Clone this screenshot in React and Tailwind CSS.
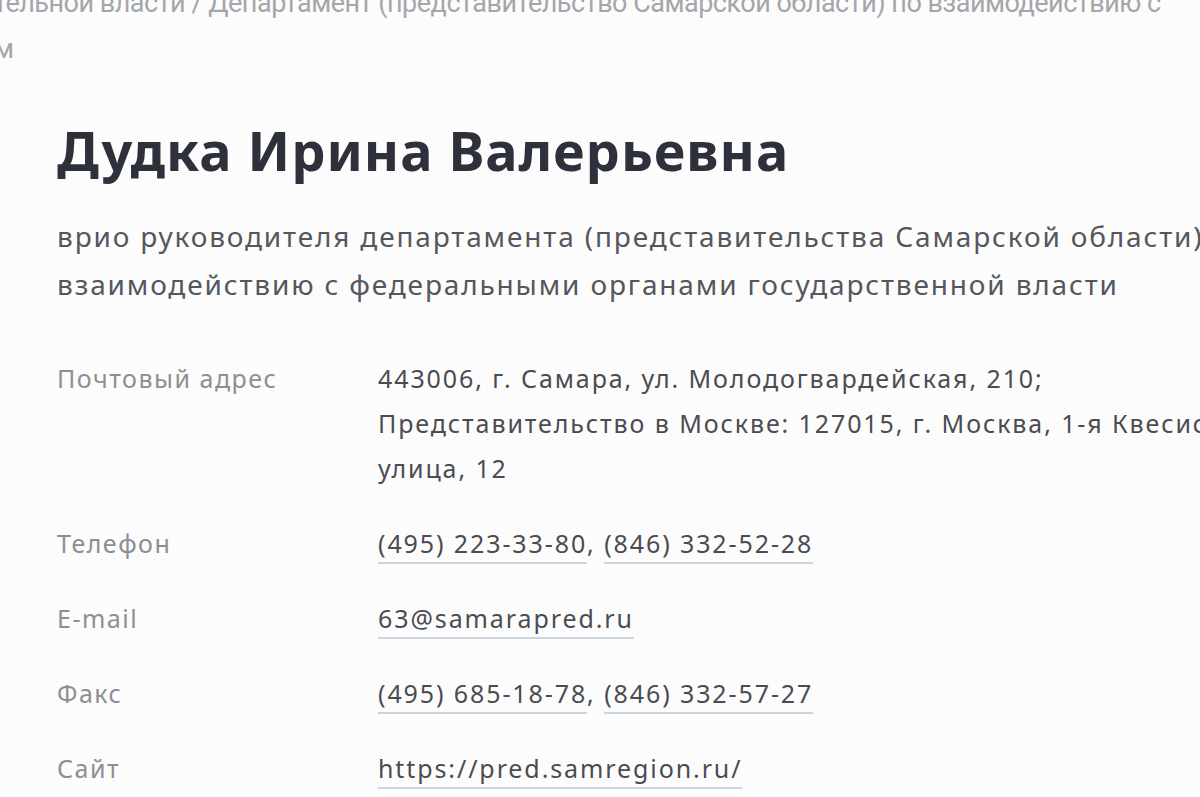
import React from 'react'

const rows = [
  { label: 'Телефон', links: ['(495) 223-33-80', '(846) 332-52-28'] },
  { label: 'E-mail', links: ['63@samarapred.ru'] },
  { label: 'Факс', links: ['(495) 685-18-78', '(846) 332-57-27'] },
  { label: 'Сайт', links: ['https://pred.samregion.ru/'] },
]

function Link({ children }) {
  return (
    <span className="border-b-2 border-[#c9d6e2] pb-[2px]">{children}</span>
  )
}

export default function App() {
  return (
    <div
      className="w-[1200px] h-[797px] overflow-hidden bg-[#fcfcfc] relative"
      style={{ fontFamily: '"Noto Sans", Roboto, sans-serif' }}
    >
      {/* breadcrumb, cut off at the top */}
      <div
        className="-mt-[20px] -ml-[6px] text-[27px] leading-[46px] text-[#a4a6ab] whitespace-nowrap tracking-[-0.5px]"
        style={{ fontFamily: 'Roboto, sans-serif' }}
      >
        <div>тельной власти / Департамент (представительство Самарской области) по взаимодействию с</div>
        <div>м</div>
      </div>

      <div className="pl-[57px]">
        <h1 className="mt-[46px] text-[54px] leading-[64px] font-bold text-[#2e303c] whitespace-nowrap tracking-[1px]">
          Дудка Ирина Валерьевна
        </h1>

        <div className="mt-[30px] text-[28px] leading-[48px] text-[#55575c] whitespace-nowrap tracking-[1.85px]">
          <div>врио руководителя департамента (представительства Самарской области) по</div>
          <div>взаимодействию с федеральными органами государственной власти</div>
        </div>

        <div className="mt-[48px] text-[25px] whitespace-nowrap">
          <div className="flex">
            <div className="w-[321px] shrink-0 text-[#8d8f94] leading-[45px] tracking-[1.5px]">Почтовый адрес</div>
            <div className="text-[#4a4c52] leading-[45px] tracking-[1.9px]">
              <div>443006, г. Самара, ул. Молодогвардейская, 210;</div>
              <div>Представительство в Москве: 127015, г. Москва, 1-я Квесисская</div>
              <div>улица, 12</div>
            </div>
          </div>
          {rows.map((r) => (
            <div key={r.label} className="flex mt-[30px]">
              <div className="w-[321px] shrink-0 text-[#8d8f94] leading-[45px] tracking-[1.5px]">{r.label}</div>
              <div className="text-[#4a4c52] leading-[45px] tracking-[1.9px]">
                {r.links.map((l, i) => (
                  <React.Fragment key={l}>
                    {i > 0 && ', '}
                    <Link>{l}</Link>
                  </React.Fragment>
                ))}
              </div>
            </div>
          ))}
        </div>
      </div>
    </div>
  )
}
